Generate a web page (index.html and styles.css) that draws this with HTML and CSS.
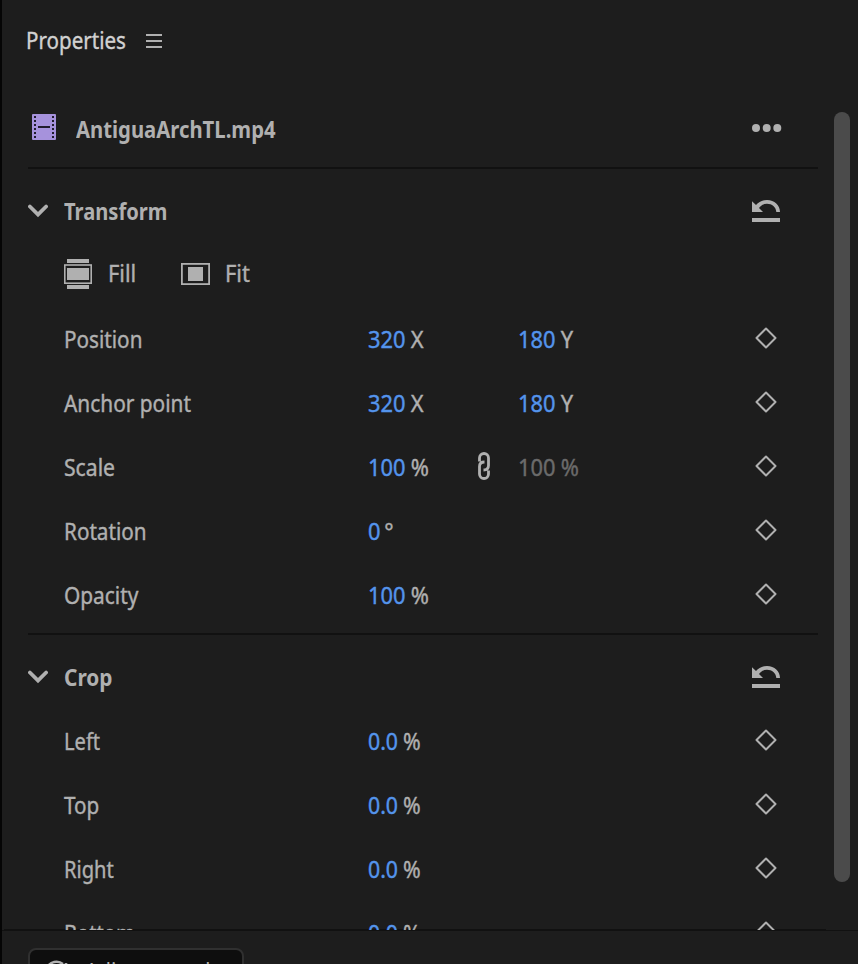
FILE: index.html
```html
<!DOCTYPE html>
<html lang="en">
<head>
<meta charset="utf-8">
<title>Properties</title>
<link rel="stylesheet" href="styles.css">
</head>
<body>
<svg class="defs" aria-hidden="true">
  <symbol id="diamond" viewBox="0 0 22 22"><path d="M11 1.5 20.500 11 11 20.500 1.500 11Z" fill="none" stroke="currentColor" stroke-width="2" stroke-linejoin="round"/></symbol>
  <symbol id="chevron" viewBox="0 0 20 14"><path d="M1.900 2.500 10 10.500 18.100 2.500" fill="none" stroke="currentColor" stroke-width="3.800" stroke-linecap="round"/></symbol>
  <symbol id="reset" viewBox="0 0 28 22"><path d="M0 1.200 4 5C7 1.800 10.500 0 15 0 22.500 0 28 5.200 28 12H24.300C24 7 20 3.800 15 3.800 11.800 3.800 9 5.200 7 8L11 12H0ZM0 18H28V22H0Z" fill="currentColor"/></symbol>
</svg>
<main class="panel">
  <header class="tab"><h1 class="title">Properties</h1><svg class="burger" viewBox="0 0 16 14"><path d="M0 1H16M0 7H16M0 13H16" stroke="currentColor" stroke-width="2"/></svg></header>
  <div class="content">
    <div class="clip">
      <svg class="film" viewBox="0 0 24 26"><rect width="24" height="26" rx="1" fill="#a692dc"/><path d="M3 2V26M21 2V26" stroke="#211c2d" stroke-width="2" stroke-dasharray="2 2"/><path d="M6 13H18" stroke="#211c2d" stroke-width="2"/></svg>
      <h2 class="name">AntiguaArchTL.mp4</h2>
      <svg class="more" viewBox="0 0 30 8"><g fill="currentColor"><circle cx="4" cy="4" r="4"/><circle cx="14.700" cy="4" r="4"/><circle cx="25.300" cy="4" r="4"/></g></svg>
    </div>
    <section class="group">
      <div class="head"><svg class="chev"><use href="#chevron"/></svg><h2 class="w88">Transform</h2><svg class="reset"><use href="#reset"/></svg></div>
      <div class="modes">
        <svg class="fill-icon" viewBox="0 0 28 30"><path d="M3 0H25V4H3ZM3 26H25V30H3ZM3 9H25V21H3Z" fill="currentColor"/><rect x=".8" y="6" width="26.400" height="18.200" fill="none" stroke="currentColor" stroke-width="1.600"/></svg><span class="fill-label">Fill</span>
        <svg class="fit-icon" viewBox="0 0 29 22"><rect x=".9" y=".9" width="27.200" height="20.200" fill="none" stroke="currentColor" stroke-width="1.800"/><path d="M7 4H22V18H7Z" fill="currentColor"/></svg><span class="fit-label">Fit</span>
      </div>
      <div class="row"><span class="label">Position</span><span class="val"><b>320</b> X</span><i></i><span class="val"><b>180</b> Y</span><svg class="key"><use href="#diamond"/></svg></div>
      <div class="row"><span class="label w91">Anchor point</span><span class="val"><b>320</b> X</span><i></i><span class="val"><b>180</b> Y</span><svg class="key"><use href="#diamond"/></svg></div>
      <div class="row"><span class="label w92">Scale</span><span class="val"><b>100</b> %</span><svg class="link" viewBox="0 0 12 28"><path d="M1.500 9.500V6A4.500 4.500 0 0 1 10.500 6V13.500Q10.500 18 5.500 18M10.500 18.500V22A4.500 4.500 0 0 1 1.500 22V14.500Q1.500 10 6.500 10" fill="none" stroke="currentColor" stroke-width="2.800"/></svg><span class="val off">100 %</span><svg class="key"><use href="#diamond"/></svg></div>
      <div class="row"><span class="label">Rotation</span><span class="val deg"><b>0</b> °</span><i></i><span></span><svg class="key"><use href="#diamond"/></svg></div>
      <div class="row"><span class="label w91">Opacity</span><span class="val"><b>100</b> %</span><i></i><span></span><svg class="key"><use href="#diamond"/></svg></div>
    </section>
    <section class="group crop">
      <div class="head"><svg class="chev"><use href="#chevron"/></svg><h2 class="w91">Crop</h2><svg class="reset"><use href="#reset"/></svg></div>
      <div class="row"><span class="label w88">Left</span><span class="val dec"><b>0.0</b> %</span><i></i><span></span><svg class="key"><use href="#diamond"/></svg></div>
      <div class="row"><span class="label">Top</span><span class="val dec"><b>0.0</b> %</span><i></i><span></span><svg class="key"><use href="#diamond"/></svg></div>
      <div class="row"><span class="label w88">Right</span><span class="val dec"><b>0.0</b> %</span><i></i><span></span><svg class="key"><use href="#diamond"/></svg></div>
      <div class="row"><span class="label w88">Bottom</span><span class="val dec"><b>0.0</b> %</span><i></i><span></span><svg class="key"><use href="#diamond"/></svg></div>
    </section>
    <div class="scrollbar"></div>
  </div>
  <footer class="footer"><button class="action"><svg class="spin" viewBox="0 0 24 24"><path d="M18 4A10.500 10.500 0 1 0 22 13M21 3V7H17" fill="none" stroke="currentColor" stroke-width="2.600"/></svg><span class="action-label">Adjust speed</span></button></footer>
</main>
</body>
</html>
```
FILE: styles.css
```css
* { box-sizing: border-box; }
body { margin: 0; background: #1d1d1d; color: #b0b0b0; font: 23px/32px "Noto Sans", sans-serif; overflow: hidden; }
.defs { position: absolute; width: 0; height: 0; }
svg { display: block; flex: none; }
h1, h2 { margin: 0; font-size: inherit; }
.panel { height: 964px; border-left: 2px solid #050505; display: flex; flex-direction: column; overflow: hidden; }
.tab { height: 81px; margin-bottom: 2px; padding-left: 24px; display: flex; align-items: center; gap: 20px; flex: none; }
.title { font-weight: 400; color: #d1d1d1; width: 100px; padding-bottom: 2px; transform: scaleX(.895); transform-origin: 0 50%; -webkit-text-stroke: .4px; }
.burger { width: 16px; height: 14px; }
.content { height: 847px; overflow: hidden; position: relative; flex: none; padding: 0 40px 0 26px; background: linear-gradient(#111, #111) 2px 100% / 822px 1px no-repeat; }
.clip { height: 86px; display: flex; align-items: center; padding: 4px 36px 0 4px; border-bottom: 2px solid #111; }
.film { width: 24px; height: 26px; }
.more { width: 30px; height: 8px; margin-top: 2px; }
.head { height: 73px; display: flex; align-items: center; padding: 11px 38px 0 0; }
.chev { width: 20px; height: 14px; margin-right: 16px; }
.head h2 { flex: 1; padding-bottom: 1px; }
.reset { width: 28px; height: 22px; }
.modes { height: 38px; margin: 13px 0; display: flex; align-items: center; padding-left: 36px; }
.fill-icon { width: 28px; height: 30px; margin-right: 16px; }
.fill-label { width: 74px; }
.fit-icon { width: 29px; height: 22px; margin: 0 15px 0 -1px; }
.row { height: 64px; display: grid; grid-template-columns: 304px 109px 41px 1fr 22px; align-items: center; padding: 0 41px 0 36px; }
.label, .val { padding-top: 1px; transform: scaleX(.9); transform-origin: 0 50%; -webkit-text-stroke: .4px; }
.val { transform: scaleX(.95); word-spacing: -.5px; }
.val.dec { transform: scaleX(.925); }
.val.deg { word-spacing: -2px; }
.val b { color: #5494ec; font-weight: 400; }
.val.off { color: #6b6b6b; }
.w88, .w91, .w92, .name { transform: scaleX(.875); transform-origin: 0 50%; }
.w91 { transform: scaleX(.907); }
.label.w92 { transform: scaleX(.92); }
.name { margin-left: 20px; padding-top: 3px; flex: 1; transform: scaleX(.882); }
.fill-label, .fit-label { padding-bottom: 2px; transform: scaleX(.95); transform-origin: 0 50%; -webkit-text-stroke: .4px; }
.link { width: 14px; height: 28px; }
.key { width: 22px; height: 22px; }
.crop { border-top: 2px solid #111; margin-top: 7px; }
.scrollbar { position: absolute; right: 8px; top: 29px; width: 16px; height: 770px; border-radius: 8px; background: #4b4b4b; }
.footer { padding: 17px 26px 0; border-top: 1px solid #111; }
.action { width: 216px; height: 48px; display: flex; align-items: center; gap: 16px; padding: 0 15px; border: 2px solid #303030; border-radius: 8px; background: #0e0e0e; color: inherit; font: inherit; }
.action-label { white-space: nowrap; transform: scaleX(.9); transform-origin: 0 50%; padding-bottom: 2px; }
.spin { width: 24px; height: 24px; }
```
